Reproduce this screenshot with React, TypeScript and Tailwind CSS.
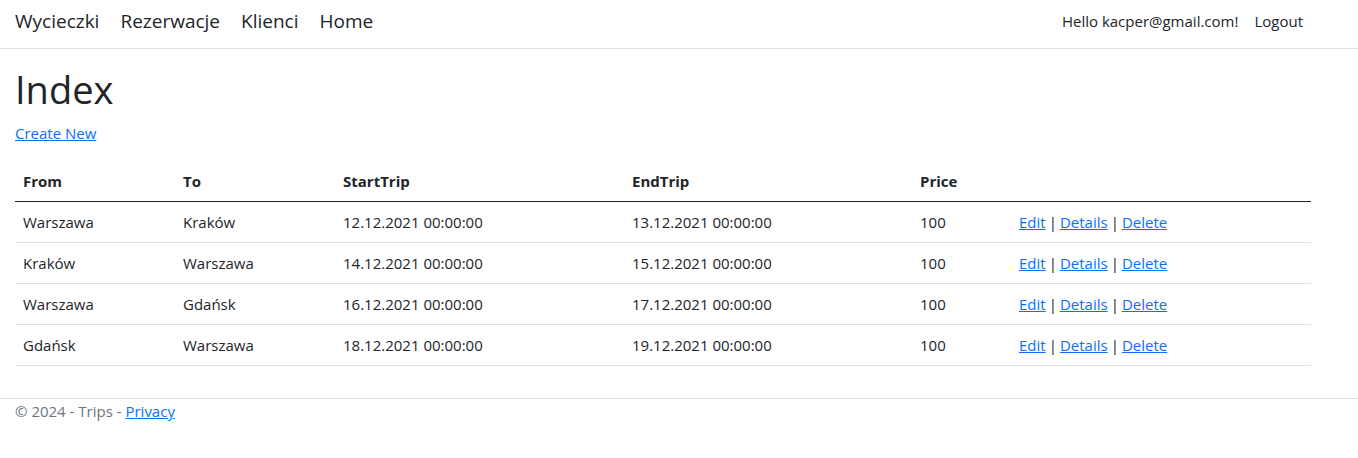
const trips = [
  { from: "Warszawa", to: "Kraków", start: "12.12.2021 00:00:00", end: "13.12.2021 00:00:00", price: 100 },
  { from: "Kraków", to: "Warszawa", start: "14.12.2021 00:00:00", end: "15.12.2021 00:00:00", price: 100 },
  { from: "Warszawa", to: "Gdańsk", start: "16.12.2021 00:00:00", end: "17.12.2021 00:00:00", price: 100 },
  { from: "Gdańsk", to: "Warszawa", start: "18.12.2021 00:00:00", end: "19.12.2021 00:00:00", price: 100 },
];

const navLinks = ["Wycieczki", "Rezerwacje", "Klienci", "Home"];

export default function App() {
  return (
    <div
      className="min-h-[458px] bg-white text-[#212529] text-[15px] leading-6"
      style={{ fontFamily: '"Open Sans", "Noto Sans", sans-serif' }}
    >
      <header className="border-b border-[#dee2e6] h-[49px]">
        <nav className="flex items-start h-[48px] pt-[8px] pl-[15px] pr-[47px]">
          <div className="flex items-center gap-[21px] text-[19px] leading-[26px]">
            {navLinks.map((label) => (
              <a key={label} href="#" className="text-[#212529]">
                {label}
              </a>
            ))}
          </div>
          <div className="ml-auto flex items-center gap-[16px] pr-[8px] pt-[1px]">
            <span>Hello kacper@gmail.com!</span>
            <a href="#" className="text-[#212529]">Logout</a>
          </div>
        </nav>
      </header>

      <main className="pl-[15px] pr-[47px] pt-[18px] pb-[32px]">
        <h1 className="text-[38px] font-medium leading-[1.2] mb-[8px]">Index</h1>
        <p className="mb-[16px]">
          <a href="#" className="text-[#0d6efd] underline">Create New</a>
        </p>
        <table className="w-full border-collapse table-fixed">
          <colgroup>
            <col className="w-[160px]" />
            <col className="w-[160px]" />
            <col className="w-[289px]" />
            <col className="w-[288px]" />
            <col className="w-[99px]" />
            <col />
          </colgroup>
          <thead>
            <tr className="border-b border-[#212529]">
              <th className="text-left font-bold px-2 py-2">From</th>
              <th className="text-left font-bold px-2 py-2">To</th>
              <th className="text-left font-bold px-2 py-2">StartTrip</th>
              <th className="text-left font-bold px-2 py-2">EndTrip</th>
              <th className="text-left font-bold px-2 py-2">Price</th>
              <th className="px-2 py-2"></th>
            </tr>
          </thead>
          <tbody>
            {trips.map((t, i) => (
              <tr key={i} className="border-b border-[#dee2e6]">
                <td className="px-2 py-2">{t.from}</td>
                <td className="px-2 py-2">{t.to}</td>
                <td className="px-2 py-2">{t.start}</td>
                <td className="px-2 py-2">{t.end}</td>
                <td className="px-2 py-2">{t.price}</td>
                <td className="px-2 py-2">
                  <a href="#" className="text-[#0d6efd] underline">Edit</a>
                  <span className="mx-[3px]">|</span>
                  <a href="#" className="text-[#0d6efd] underline">Details</a>
                  <span className="mx-[3px]">|</span>
                  <a href="#" className="text-[#0d6efd] underline">Delete</a>
                </td>
              </tr>
            ))}
          </tbody>
        </table>
      </main>

      <footer className="border-t border-[#dee2e6] pl-[15px] text-[#6c757d]">
        © 2024 - Trips - <a href="#" className="text-[#0d6efd] underline">Privacy</a>
      </footer>
    </div>
  );
}
